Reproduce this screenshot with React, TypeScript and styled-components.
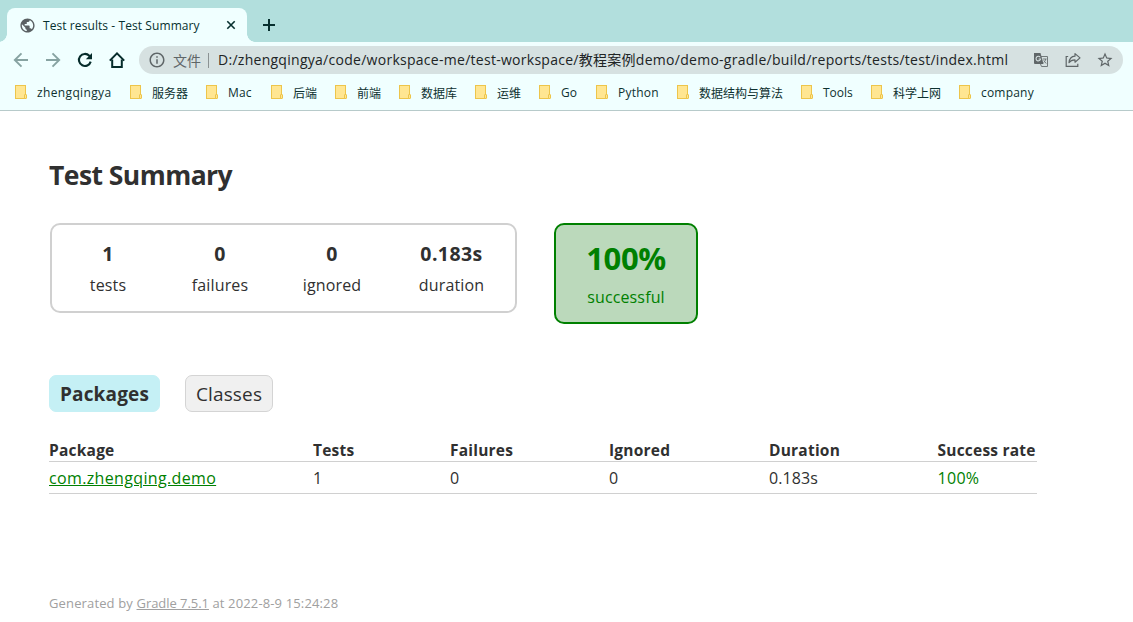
import React from "react";
import styled, { createGlobalStyle } from "styled-components";
import { MdPublic, MdOutlineInfo, MdStarOutline } from "react-icons/md";

const Global = createGlobalStyle`
  * { box-sizing: border-box; }
  body { margin: 0; background: #fff; color: #303030; font-family: "Open Sans", "Noto Sans CJK SC", sans-serif; }
  svg { display: block; flex: none; }
`;

const Window = styled.div`
  width: 1133px;
  height: 622px;
  overflow: hidden;
  background: #fff;
`;

const TabStrip = styled.div`
  display: flex;
  height: 42px;
  padding: 8px 0 0 7px;
  background: #b2dfdd;
`;

const BrowserTab = styled.div`
  position: relative;
  display: flex;
  align-items: center;
  width: 240px;
  height: 34px;
  padding: 0 11px 0 12px;
  border-radius: 8px 8px 0 0;
  background: #f0ffff;
  color: #07302f;
  &::before, &::after {
    content: "";
    position: absolute;
    bottom: 0;
    width: 8px;
    height: 8px;
  }
  &::before { left: -8px; background: radial-gradient(circle at 0 0, #b2dfdd 7.5px, #f0ffff 8px); }
  &::after { right: -8px; background: radial-gradient(circle at 100% 0, #b2dfdd 7.5px, #f0ffff 8px); }
`;

const TabTitle = styled.span`
  flex: 1;
  margin-left: 7px;
  padding-top: 1px;
  font-size: 12px;
  line-height: 18px;
  letter-spacing: 0.08px;
  white-space: nowrap;
`;

const NewTab = styled.div`
  margin: 11px 0 0 16px;
  color: #07302f;
`;

const Toolbar = styled.div`
  display: flex;
  align-items: center;
  height: 36px;
  padding: 0 10px 0 13px;
  background: #f0ffff;
`;

const NavIcon = styled.div<{ $dim?: boolean }>`
  width: 32px;
  color: ${p => (p.$dim ? "#87a3a2" : "#062c2b")};
  &:last-of-type { width: 30px; }
`;

const AddressBar = styled.section`
  display: flex;
  align-items: center;
  flex: 1;
  height: 28px;
  padding: 0 9px 0 9px;
  border-radius: 14px;
  background: #d6e1e1;
  color: #5f6668;
`;

const Scheme = styled.span`
  margin-left: 7px;
  padding-right: 7px;
  border-right: 1px solid #8b9293;
  font-size: 14px;
  line-height: 15px;
`;

const Url = styled.span`
  flex: 1;
  margin-left: 9px;
  font-size: 14px;
  line-height: 20px;
  letter-spacing: 0.275px;
  color: #202425;
  white-space: nowrap;
`;

const AddressActions = styled.div`
  display: grid;
  grid-template-columns: 31px 31px 18px;
  align-items: center;
`;

const Bookmarks = styled.div`
  display: flex;
  height: 33px;
  padding-left: 15px;
  border-bottom: 1px solid #b7caca;
  background: #f0ffff;
`;

const Bookmark = styled.div<{ $width: number; $spacing: number }>`
  display: flex;
  align-items: center;
  flex: none;
  gap: 10px;
  width: ${p => p.$width}px;
  height: 29px;
  font-size: 12px;
  letter-spacing: ${p => p.$spacing}px;
  color: #0e3130;
  white-space: nowrap;
`;

const Report = styled.main`
  padding: 46px 0 0 49px;
`;

const Title = styled.h1`
  margin: 0;
  font-size: 26.5px;
  font-weight: 700;
  line-height: 36px;
  letter-spacing: -0.55px;
`;

const Summary = styled.section`
  display: flex;
  align-items: flex-start;
  gap: 37px;
  margin: 30px 0 0 1px;
`;

const Counters = styled.div`
  display: grid;
  grid-template-columns: 112px 112px 112px 127px;
  width: 467px;
  height: 90px;
  padding-top: 14px;
  border: 2px solid #d0d0d0;
  border-radius: 10px;
  text-align: center;
`;

const Value = styled.div`
  font-size: 19.5px;
  font-weight: 700;
  line-height: 30px;
  letter-spacing: 0.4px;
`;

const Label = styled.div`
  font-size: 16px;
  line-height: 32px;
  letter-spacing: 0.13px;
`;

const SuccessBox = styled.div`
  width: 144px;
  height: 101px;
  padding-top: 13px;
  border: 2px solid #008000;
  border-radius: 10px;
  background: #bbd9bb;
  color: #008000;
  text-align: center;
`;

const Percent = styled.div`
  margin-bottom: 3px;
  font-size: 31px;
  font-weight: 700;
  line-height: 40px;
  letter-spacing: -0.4px;
`;

const ReportTabs = styled.nav`
  display: flex;
  gap: 25px;
  margin-top: 51px;
`;

const ReportTab = styled.a<{ $active?: boolean }>`
  width: ${p => (p.$active ? 111 : 88)}px;
  height: 37px;
  border: 1px solid ${p => (p.$active ? "#c5f0f5" : "#d4d4d4")};
  border-radius: 7px;
  background: ${p => (p.$active ? "#c5f0f5" : "#f0f0f0")};
  font-size: 19px;
  font-weight: ${p => (p.$active ? 700 : 400)};
  line-height: 36px;
  letter-spacing: 0.15px;
  text-align: center;
`;

const Table = styled.div`
  width: 988px;
  margin-top: 28px;
`;

const Row = styled.div<{ $head?: boolean }>`
  display: grid;
  grid-template-columns: 264px 137px 159px 160px 168.5px 99.5px;
  height: ${p => (p.$head ? 22 : 32)}px;
  border-bottom: 1px solid #d0d0d0;
  font-size: ${p => (p.$head ? 15.5 : 16)}px;
  font-weight: ${p => (p.$head ? 700 : 400)};
  line-height: ${p => (p.$head ? 20 : 32)}px;
  letter-spacing: ${p => (p.$head ? 0.22 : 0.1)}px;
  white-space: nowrap;
`;

const PackageLink = styled.a`
  letter-spacing: 0.35px;
  color: #008000;
  text-decoration: underline;
`;

const Rate = styled.span`
  letter-spacing: 0.3px;
  color: #008000;
`;

const Footer = styled.footer`
  margin-top: 99px;
  font-size: 13px;
  line-height: 20px;
  letter-spacing: 0.14px;
  color: #a0a0a0;
`;

const FooterLink = styled.a`
  letter-spacing: -0.05px;
  text-decoration: underline;
`;

const CloseIcon = () => (
  <svg width="10" height="10" viewBox="0 0 10 10" stroke="currentColor" strokeWidth="1.6">
    <path d="M1.300 1.300l7.400 7.400M8.700 1.300L1.300 8.700" />
  </svg>
);

const PlusIcon = () => (
  <svg width="12" height="12" viewBox="0 0 12 12" stroke="currentColor" strokeWidth="2">
    <path d="M6 0v12M0 6h12" />
  </svg>
);

const ArrowIcon = ({ forward }: { forward?: boolean }) => (
  <svg width="16" height="16" viewBox="0 0 16 16" fill="none" stroke="currentColor" strokeWidth="1.9">
    <path d={forward ? "M1 8h13M7.500 1.300L14.200 8l-6.700 6.700" : "M15 8H2M8.500 1.300L1.800 8l6.700 6.700"} />
  </svg>
);

const ReloadIcon = () => (
  <svg width="16" height="16" viewBox="0 0 16 16" fill="none" stroke="currentColor" strokeWidth="2.1">
    <path d="M13.700 9.600A6 6 0 1 1 12.300 3.800L13.500 5" />
    <path d="M15 1v6.200H8.800z" fill="currentColor" stroke="none" />
  </svg>
);

const HomeIcon = () => (
  <svg width="16" height="16" viewBox="0 0 16 16" fill="none" stroke="currentColor" strokeWidth="2">
    <path d="M.8 8.600L8 1.400l7.200 7.200" />
    <path d="M3.200 7.500V15h9.600V7.500" />
  </svg>
);

const TranslateIcon = () => (
  <svg width="14" height="14" viewBox="0 0 14 14" fill="none">
    <path d="M6 3.500h7.500v10H7.500L6.500 11" stroke="#727a7b" />
    <path d="M0 0h6.500l3 11H1a1 1 0 0 1-1-1z" fill="#5f6668" />
    <path d="M6.200 4.200A2.300 2.300 0 1 0 6.600 6H4.600" stroke="#d6e1e1" strokeWidth="1.1" />
    <path d="M8.800 6h3.800M11.700 6c-.2 1.600-1 2.700-2 3.500M9.700 7.500l2.500 3" stroke="#727a7b" />
  </svg>
);

const FolderIcon = () => (
  <svg width="12" height="15" viewBox="0 0 12 15">
    <rect x=".5" y=".5" width="10" height="13" fill="#ffe692" stroke="#edc54b" />
    <rect x="9.500" y="9.500" width="2" height="4" rx=".5" fill="#ffe692" stroke="#edc54b" />
  </svg>
);

const ShareIcon = () => (
  <svg width="16" height="16" viewBox="0 0 16 16" fill="none" stroke="currentColor" strokeWidth="1.2">
    <path d="M3.200 4.500H1.200v9.900h11.600v-2.600" />
    <path d="M10 1.600l5 4.300-5 4.300V7.900C7.300 7.900 5.300 8.700 4 10.700c.3-3.500 2.300-6.200 6-6.500z" strokeLinejoin="round" />
  </svg>
);

const bookmarks: [string, number, number][] = [
  ["zhengqingya", 115, 0.36],
  ["服务器", 76, 0],
  ["Mac", 65, 0.2],
  ["后端", 64, 0],
  ["前端", 64, 0],
  ["数据库", 76, 0],
  ["运维", 64, 0],
  ["Go", 57, 0],
  ["Python", 81, 0.25],
  ["数据结构与算法", 124, 0],
  ["Tools", 70, 0],
  ["科学上网", 88, 0],
  ["company", 80, 0.2],
];

const counters = [
  ["1", "tests"],
  ["0", "failures"],
  ["0", "ignored"],
  ["0.183s", "duration"],
];

export default function App() {
  return (
    <Window>
      <Global />
      <TabStrip>
        <BrowserTab>
          <MdPublic size={17} color="#5a6063" />
          <TabTitle>Test results - Test Summary</TabTitle>
          <CloseIcon />
        </BrowserTab>
        <NewTab><PlusIcon /></NewTab>
      </TabStrip>
      <Toolbar>
        <NavIcon $dim><ArrowIcon /></NavIcon>
        <NavIcon $dim><ArrowIcon forward /></NavIcon>
        <NavIcon><ReloadIcon /></NavIcon>
        <NavIcon><HomeIcon /></NavIcon>
        <AddressBar>
          <MdOutlineInfo size={18} />
          <Scheme>文件</Scheme>
          <Url>D:/zhengqingya/code/workspace-me/test-workspace/教程案例demo/demo-gradle/build/reports/tests/test/index.html</Url>
          <AddressActions>
            <TranslateIcon />
            <ShareIcon />
            <MdStarOutline size={18} />
          </AddressActions>
        </AddressBar>
      </Toolbar>
      <Bookmarks>
        {bookmarks.map(([name, width, spacing]) => (
          <Bookmark key={name} $width={width} $spacing={spacing}>
            <FolderIcon />
            <span>{name}</span>
          </Bookmark>
        ))}
      </Bookmarks>
      <Report>
        <Title>Test Summary</Title>
        <Summary>
          <Counters>
            {counters.map(([value, label]) => (
              <div key={label}>
                <Value>{value}</Value>
                <Label>{label}</Label>
              </div>
            ))}
          </Counters>
          <SuccessBox>
            <Percent>100%</Percent>
            <Label>successful</Label>
          </SuccessBox>
        </Summary>
        <ReportTabs>
          <ReportTab $active>Packages</ReportTab>
          <ReportTab>Classes</ReportTab>
        </ReportTabs>
        <Table>
          <Row $head>
            <span>Package</span>
            <span>Tests</span>
            <span>Failures</span>
            <span>Ignored</span>
            <span>Duration</span>
            <span>Success rate</span>
          </Row>
          <Row>
            <PackageLink>com.zhengqing.demo</PackageLink>
            <span>1</span>
            <span>0</span>
            <span>0</span>
            <span>0.183s</span>
            <Rate>100%</Rate>
          </Row>
        </Table>
        <Footer>
          Generated by <FooterLink>Gradle 7.5.1</FooterLink> at 2022-8-9 15:24:28
        </Footer>
      </Report>
    </Window>
  );
}
